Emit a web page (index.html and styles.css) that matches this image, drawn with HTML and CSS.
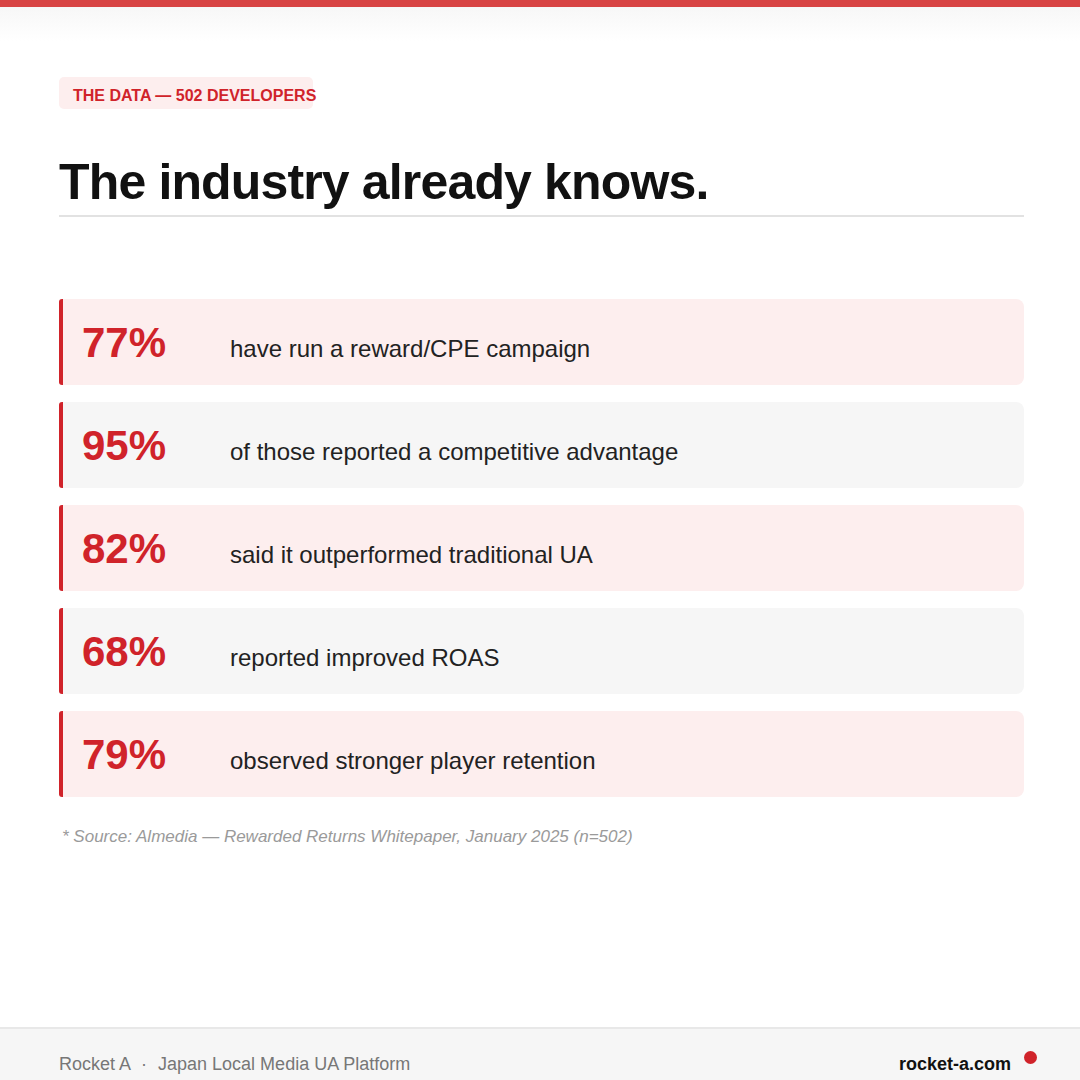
FILE: index.html
```html
<!DOCTYPE html>
<html lang="en">
<head>
<meta charset="utf-8">
<title>The industry already knows.</title>
<link rel="stylesheet" href="styles.css">
</head>
<body>
<div class="page">
  <div class="topbar"></div>
  <main class="content">
    <div class="tag">THE DATA — 502 DEVELOPERS</div>
    <h1 class="title">The industry already knows.</h1>
    <ul class="stats">
      <li class="stat stat-pink"><span class="num">77%</span><span class="label">have run a reward/CPE campaign</span></li>
      <li class="stat stat-gray"><span class="num">95%</span><span class="label">of those reported a competitive advantage</span></li>
      <li class="stat stat-pink"><span class="num">82%</span><span class="label">said it outperformed traditional UA</span></li>
      <li class="stat stat-gray"><span class="num">68%</span><span class="label">reported improved ROAS</span></li>
      <li class="stat stat-pink"><span class="num">79%</span><span class="label">observed stronger player retention</span></li>
    </ul>
    <p class="source">* Source: Almedia — Rewarded Returns Whitepaper, January 2025 (n=502)</p>
  </main>
  <footer class="footer">
    <span class="footer-left">Rocket A <span class="sep">·</span> Japan Local Media UA Platform</span>
    <span class="footer-right">rocket-a.com<span class="dot"></span></span>
  </footer>
</div>
</body>
</html>
```

FILE: styles.css
```css
* { box-sizing: border-box; }
html, body { margin: 0; padding: 0; }
body {
  background: #ffffff;
  font-family: "Liberation Sans", Arial, sans-serif;
  color: #111;
}
.page {
  width: 1080px;
  height: 1080px;
  display: flex;
  flex-direction: column;
  overflow: hidden;
}
.topbar {
  height: 7px;
  background: #d84444;
  flex: none;
}
.content {
  flex: 1;
  padding: 70px 56px 0 59px;
  background: linear-gradient(180deg, #f7f7f7 0px, #ffffff 34px);
  background-size: 100% 40px;
  background-repeat: no-repeat;
}
.tag {
  width: 254px;
  height: 32px;
  background: #fdeeee;
  border-radius: 5px;
  color: #d0232a;
  font-weight: 700;
  font-size: 16px;
  line-height: 18px;
  padding: 10px 0 0 14px;
  white-space: nowrap;
  overflow: visible;
}
.title {
  margin: 43px 0 0;
  font-size: 50px;
  line-height: 60px;
  font-weight: 700;
  color: #111;
  padding-bottom: 3px;
  border-bottom: 2px solid #e2e2e2;
  letter-spacing: -0.85px;
}
.stats {
  list-style: none;
  margin: 82px 0 0;
  padding: 0;
  display: flex;
  flex-direction: column;
  gap: 17px;
}
.stat {
  height: 86px;
  display: flex;
  align-items: baseline;
  padding: 23px 20px 0 19px;
  border-left: 4px solid #d0232a;
  border-radius: 3px 8px 8px 3px;
}
.stat-pink { background: #fdeeee; }
.stat-gray { background: #f6f6f6; }
.num {
  width: 148px;
  flex: none;
  font-size: 42px;
  line-height: 42px;
  font-weight: 700;
  color: #d0232a;
}
.label {
  font-size: 24px;
  color: #222;
}
.source {
  margin: 30px 0 0 3px;
  font-size: 17px;
  font-style: italic;
  color: #9a9a9a;
}
.footer {
  flex: none;
  height: 53px;
  background: #f6f6f6;
  border-top: 2px solid #e8e8e8;
  display: flex;
  justify-content: space-between;
  align-items: flex-start;
  padding: 25px 69px 0 59px;
  font-size: 18px;
  line-height: 20px;
}
.footer-left { color: #777; }
.sep { margin: 0 6px; }
.footer-right {
  color: #111;
  font-weight: 700;
  position: relative;
}
.dot {
  position: absolute;
  right: -26px;
  top: -3px;
  width: 13px;
  height: 13px;
  border-radius: 50%;
  background: #d0232a;
}
```
